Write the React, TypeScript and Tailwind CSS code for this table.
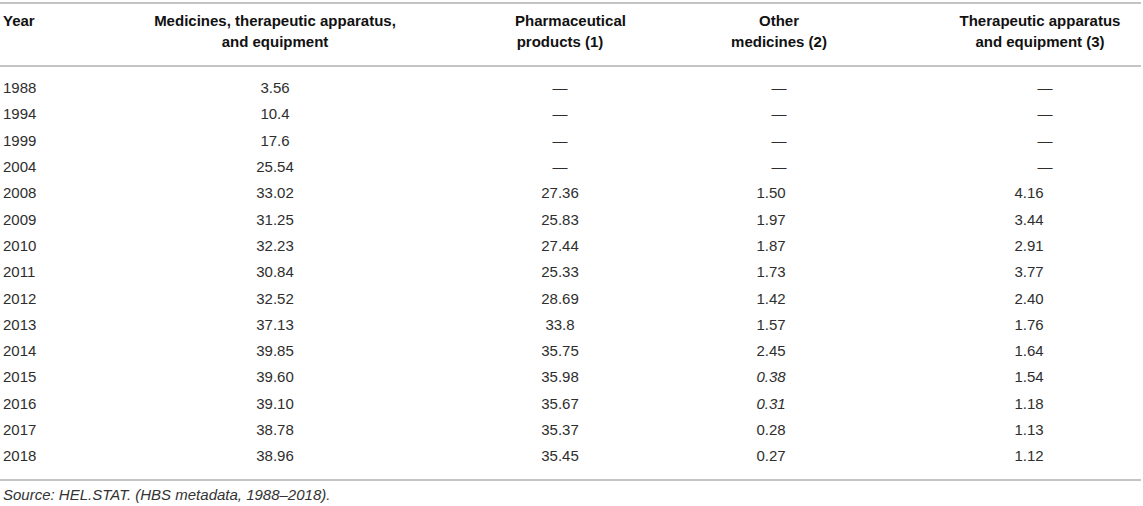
import React from "react";

type Row = { y: string; a: string; b: string; c: string; d: string; ci?: boolean };

const D = "—";
const rows: Row[] = [
  { y: "1988", a: "3.56", b: D, c: D, d: D },
  { y: "1994", a: "10.4", b: D, c: D, d: D },
  { y: "1999", a: "17.6", b: D, c: D, d: D },
  { y: "2004", a: "25.54", b: D, c: D, d: D },
  { y: "2008", a: "33.02", b: "27.36", c: "1.50", d: "4.16" },
  { y: "2009", a: "31.25", b: "25.83", c: "1.97", d: "3.44" },
  { y: "2010", a: "32.23", b: "27.44", c: "1.87", d: "2.91" },
  { y: "2011", a: "30.84", b: "25.33", c: "1.73", d: "3.77" },
  { y: "2012", a: "32.52", b: "28.69", c: "1.42", d: "2.40" },
  { y: "2013", a: "37.13", b: "33.8", c: "1.57", d: "1.76" },
  { y: "2014", a: "39.85", b: "35.75", c: "2.45", d: "1.64" },
  { y: "2015", a: "39.60", b: "35.98", c: "0.38", d: "1.54", ci: true },
  { y: "2016", a: "39.10", b: "35.67", c: "0.31", d: "1.18", ci: true },
  { y: "2017", a: "38.78", b: "35.37", c: "0.28", d: "1.13" },
  { y: "2018", a: "38.96", b: "35.45", c: "0.27", d: "1.12" },
];

const grid = "grid grid-cols-[110px_330px_240px_198px_263px]";

export default function App() {
  return (
    <div
      className="w-[1143px] h-[506px] bg-white overflow-hidden"
      style={{ fontFamily: '"Liberation Sans", Arial, Helvetica, sans-serif' }}
    >
      <div className="w-[1141px] pt-[2px]">
        <div className="border-t-2 border-b-2 border-[#c4c4c4]">
          <div className={`${grid} pt-[6px] pb-[13px] text-[15px] leading-[21px] font-bold text-[#111]`}>
            <div className="pl-[3px]">Year</div>
            <div className="text-center">
              Medicines, therapeutic apparatus,
              <br />
              and equipment
            </div>
            <div className="text-center">
              <div className="w-[90px] mx-auto text-center">
                Pharmaceutical
                <br />
                products (1)
              </div>
            </div>
            <div className="text-center">
              Other
              <br />
              medicines (2)
            </div>
            <div className="text-center pl-[61px]">
              Therapeutic apparatus
              <br />
              and equipment (3)
            </div>
          </div>
        </div>
        <div className="border-b-2 border-[#c4c4c4] pt-[8px] pb-[10px] text-[15px] text-[#2e2e2e]">
          {rows.map((r) => (
            <div key={r.y} className={`${grid} h-[26.3px] items-center leading-[20px]`}>
              <div className="pl-[3px]">{r.y}</div>
              <div className="text-center">{r.a}</div>
              <div className="text-center">{r.b}</div>
              <div className={`text-center ${r.c === D ? "" : "pr-[16px]"} ${r.ci ? "italic" : ""}`}>{r.c}</div>
              <div className={`text-center ${r.d === D ? "pl-[71px]" : "pl-[61px] pr-[22px]"}`}>{r.d}</div>
            </div>
          ))}
        </div>
        <div className="pt-[4px] pl-[3px] text-[15px] leading-[20px] italic text-[#333]">
          Source: HEL.STAT. (HBS metadata, 1988–2018).
        </div>
      </div>
    </div>
  );
}
